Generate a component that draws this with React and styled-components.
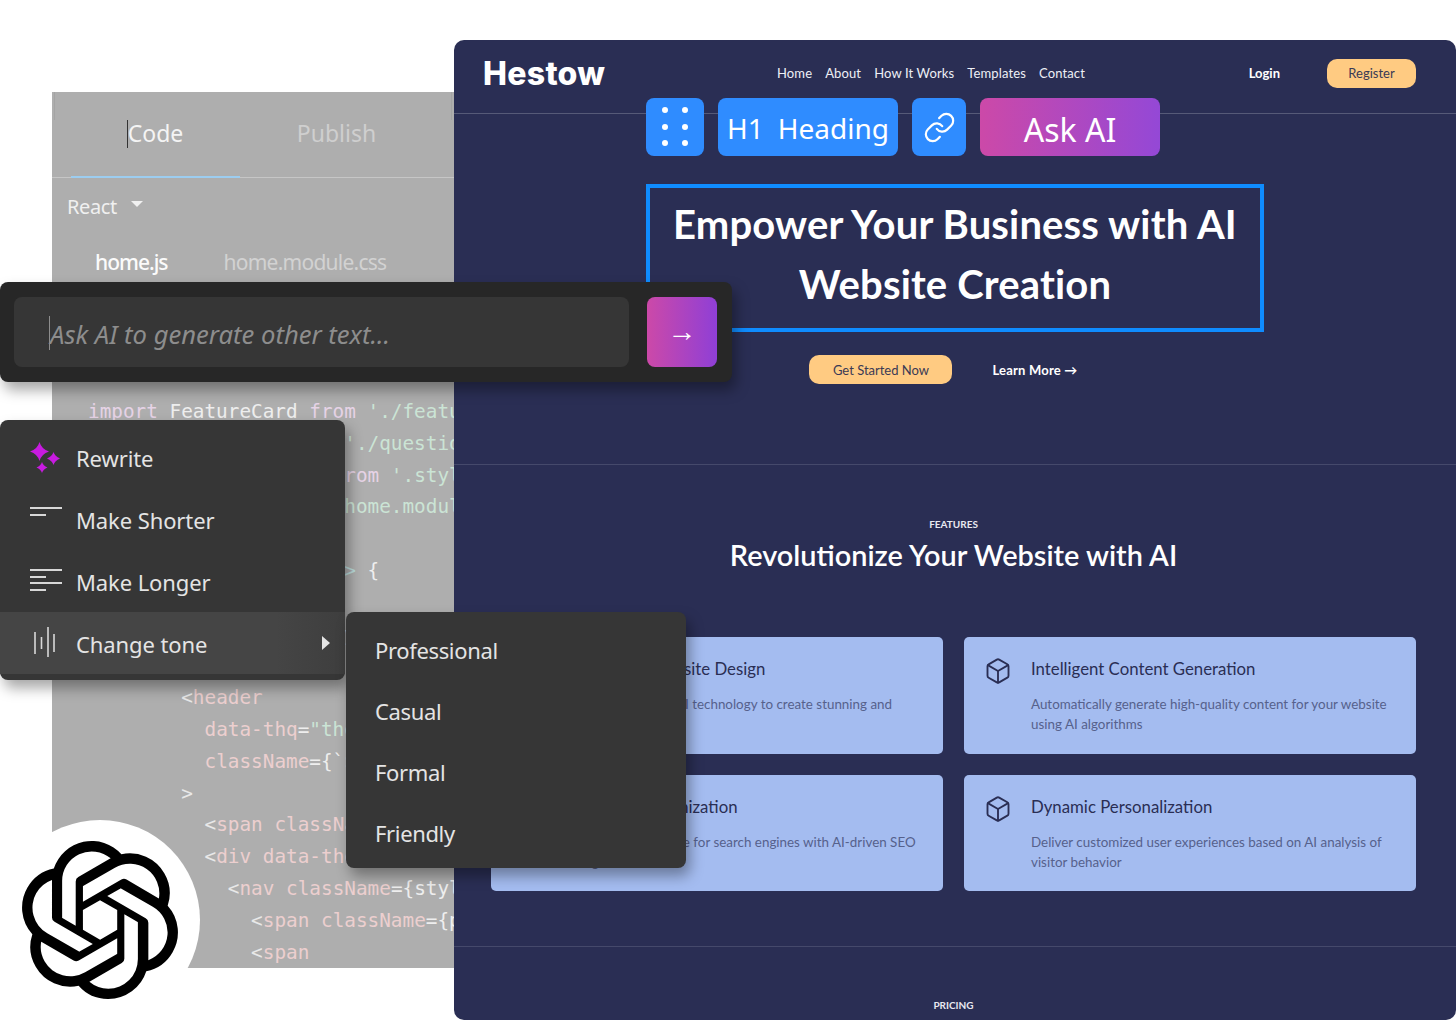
import styled, { createGlobalStyle } from "styled-components";
import { Box, Link } from "lucide-react";

const UI_FONT = `"Noto Sans", "Open Sans", sans-serif`;
const SITE_FONT = `Lato, "Noto Sans", sans-serif`;

const codeLines = [
  { indent: 0, tokens: [["kw", "import"], ["id", " FeatureCard "], ["kw", "from"], ["str", " './feature-card'"]] },
  { indent: 0, tokens: [["kw", "import"], ["id", " Question1 "], ["kw", "from"], ["str", " './question1'"]] },
  { indent: 0, tokens: [["kw", "import"], ["id", " projectStyles "], ["kw", "from"], ["str", " '.style.module.css'"]] },
  { indent: 0, tokens: [["kw", "import"], ["id", " styles "], ["kw", "from"], ["str", " './home.module.css'"]] },
  { indent: 0, tokens: [["id", " "]] },
  { indent: 0, tokens: [["kw", "const"], ["id", " Home = (props) "], ["punct", "=>"], ["id", " {"]] },
  { indent: 2, tokens: [["kw", "return"], ["id", " ("]] },
  { indent: 4, tokens: [["tag", "<div"], ["attr", " className"], ["id", "={styles}>"]] },
  { indent: 6, tokens: [["tag", "<Helmet>"]] },
  { indent: 8, tokens: [["angle", "<"], ["tag", "header"]] },
  { indent: 10, tokens: [["attr", "data-thq"], ["id", "="], ["str", '"thq-navbar"']] },
  { indent: 10, tokens: [["attr", "className"], ["id", "={`"], ["str", "${styles}"]] },
  { indent: 8, tokens: [["angle", ">"]] },
  { indent: 10, tokens: [["angle", "<"], ["tag", "span"], ["attr", " className"], ["id", "={styles}"]] },
  { indent: 10, tokens: [["angle", "<"], ["tag", "div"], ["attr", " data-thq"], ["id", "="], ["str", '"thq"']] },
  { indent: 12, tokens: [["angle", "<"], ["tag", "nav"], ["attr", " className"], ["id", "={styles}"]] },
  { indent: 14, tokens: [["angle", "<"], ["tag", "span"], ["attr", " className"], ["id", "={projectStyles}"]] },
  { indent: 14, tokens: [["angle", "<"], ["tag", "span"]] },
];

const tokenColors = {
  kw: "#e6d3e6",
  id: "#eeeeee",
  str: "#cbe4d5",
  tag: "#eccfcf",
  attr: "#eccfcf",
  angle: "#e8e8e8",
  punct: "#bcdcdc",
};

const navLinks = ["Home", "About", "How It Works", "Templates", "Contact"];

const features = [
  {
    title: "AI-Powered Website Design",
    text: "Utilize cutting-edge AI technology to create stunning and responsive websites",
  },
  {
    title: "Intelligent Content Generation",
    text: "Automatically generate high-quality content for your website using AI algorithms",
  },
  {
    title: "Smart SEO Optimization",
    text: "Optimize your website for search engines with AI-driven SEO strategies",
  },
  {
    title: "Dynamic Personalization",
    text: "Deliver customized user experiences based on AI analysis of visitor behavior",
  },
];

const SparkIcon = () => (
  <svg width="32" height="32" viewBox="0 0 32 32" fill="#c81be0">
    <path d="M9.5 1 Q11.5 8 19 10.5 Q11.5 13 9.5 20 Q7.5 13 0 10.5 Q7.5 8 9.5 1Z" />
    <path d="M23.5 11 Q24.8 15.2 30 17.5 Q24.8 19.8 23.5 24 Q22.2 19.8 17 17.5 Q22.2 15.2 23.5 11Z" />
    <path d="M12 21 Q13.2 24.8 17.5 26.5 Q13.2 28.2 12 32 Q10.8 28.2 6.5 26.5 Q10.8 24.8 12 21Z" />
  </svg>
);

const ShorterIcon = () => (
  <svg width="32" height="32" viewBox="0 0 32 32" stroke="#d8d8d8" strokeWidth="2">
    <path d="M0 5H32M0 12H16" />
  </svg>
);

const LongerIcon = () => (
  <svg width="32" height="32" viewBox="0 0 32 32" stroke="#d8d8d8" strokeWidth="2">
    <path d="M0 5H32M0 12H16M0 18H32M0 25H16" />
  </svg>
);

const ToneIcon = () => (
  <svg width="32" height="32" viewBox="0 0 32 32" stroke="#d8d8d8" strokeWidth="1.6">
    <path d="M5 5V27M11.5 10V22M18 0V30M24 7V25" />
  </svg>
);

const HandleIcon = () => (
  <svg width="26" height="40" viewBox="0 0 26 40" fill="#fff">
    <circle cx="3" cy="3" r="3" />
    <circle cx="23" cy="3" r="3" />
    <circle cx="3" cy="20" r="3" />
    <circle cx="23" cy="20" r="3" />
    <circle cx="3" cy="36" r="3" />
    <circle cx="23" cy="36" r="3" />
  </svg>
);

const OpenAiLogo = () => (
  <svg width="158" height="158" viewBox="0 0 24 24" fill="#000">
    <path d="M22.2819 9.8211a5.9847 5.9847 0 0 0-.5157-4.9108 6.0462 6.0462 0 0 0-6.5098-2.9A6.0651 6.0651 0 0 0 4.9807 4.1818a5.9847 5.9847 0 0 0-3.9977 2.9 6.0462 6.0462 0 0 0 .7427 7.0966 5.98 5.98 0 0 0 .511 4.9107 6.051 6.051 0 0 0 6.5146 2.9001A5.9847 5.9847 0 0 0 13.2599 24a6.0557 6.0557 0 0 0 5.7718-4.2058 5.9894 5.9894 0 0 0 3.9977-2.9001 6.0557 6.0557 0 0 0-.7475-7.0729zm-9.022 12.6081a4.4755 4.4755 0 0 1-2.8764-1.0408l.1419-.0804 4.7783-2.7582a.7948.7948 0 0 0 .3927-.6813v-6.7369l2.02 1.1686a.071.071 0 0 1 .038.052v5.5826a4.504 4.504 0 0 1-4.4945 4.4944zm-9.6607-4.1254a4.4708 4.4708 0 0 1-.5346-3.0137l.142.0852 4.783 2.7582a.7712.7712 0 0 0 .7806 0l5.8428-3.3685v2.3324a.0804.0804 0 0 1-.0332.0615L9.74 19.9502a4.4992 4.4992 0 0 1-6.1408-1.6464zM2.3408 7.8956a4.485 4.485 0 0 1 2.3655-1.9728V11.6a.7664.7664 0 0 0 .3879.6765l5.8144 3.3543-2.0201 1.1685a.0757.0757 0 0 1-.071 0l-4.8303-2.7865A4.504 4.504 0 0 1 2.3408 7.872zm16.5963 3.8558L13.1038 8.364 15.1192 7.2a.0757.0757 0 0 1 .071 0l4.8303 2.7913a4.4944 4.4944 0 0 1-.6765 8.1042v-5.6772a.79.79 0 0 0-.407-.667zm2.0107-3.0231l-.142-.0852-4.7735-2.7818a.7759.7759 0 0 0-.7854 0L9.409 9.2297V6.8974a.0662.0662 0 0 1 .0284-.0615l4.8303-2.7866a4.4992 4.4992 0 0 1 6.6802 4.66zM8.3065 12.863l-2.02-1.1638a.0804.0804 0 0 1-.038-.0567V6.0742a4.4992 4.4992 0 0 1 7.3757-3.4537l-.142.0805L8.704 5.459a.7948.7948 0 0 0-.3927.6813zm1.0976-2.3654l2.602-1.4998 2.6069 1.4998v2.9994l-2.5974 1.4997-2.6067-1.4997Z" />
  </svg>
);

const App = () => {
  return (
    <>
      <GlobalStyle />
      <Canvas>
        <CodePanel>
          <Tabs>
            <Tab $active>
              <TextCaret />
              Code
            </Tab>
            <Tab>Publish</Tab>
          </Tabs>
          <LanguageRow>
            React
            <DropCaret />
          </LanguageRow>
          <FileRow>
            <FileName $active>home.js</FileName>
            <FileName>home.module.css</FileName>
          </FileRow>
          <CodeBlock>
            {codeLines.map((line, i) => (
              <CodeLine key={i} $indent={line.indent}>
                {line.tokens.map(([kind, text], j) => (
                  <Token key={j} $kind={kind}>
                    {text}
                  </Token>
                ))}
              </CodeLine>
            ))}
          </CodeBlock>
        </CodePanel>

        <Preview>
          <Nav>
            <Logo>Hestow</Logo>
            <NavLinks>
              {navLinks.map((link) => (
                <NavLink key={link}>{link}</NavLink>
              ))}
            </NavLinks>
            <Auth>
              <Login>Login</Login>
              <Register>Register</Register>
            </Auth>
          </Nav>
          <Hero>
            <HeroHeading>
              Empower Your Business with AI
              <br />
              Website Creation
            </HeroHeading>
            <HeroActions>
              <PrimaryCta>Get Started Now</PrimaryCta>
              <LearnMore>Learn More →</LearnMore>
            </HeroActions>
          </Hero>
          <Features>
            <Eyebrow>FEATURES</Eyebrow>
            <SectionTitle>Revolutionize Your Website with AI</SectionTitle>
            <CardGrid>
              {features.map((feature) => (
                <Card key={feature.title}>
                  <CardIcon>
                    <Box size={28} strokeWidth={1.6} />
                  </CardIcon>
                  <div>
                    <CardTitle>{feature.title}</CardTitle>
                    <CardText>{feature.text}</CardText>
                  </div>
                </Card>
              ))}
            </CardGrid>
          </Features>
          <Pricing>
            <Eyebrow>PRICING</Eyebrow>
          </Pricing>
        </Preview>

        <Toolbar>
          <ToolButton $width={58}>
            <HandleIcon />
          </ToolButton>
          <ToolButton $width={180}>
            <HeadingLabel>H1</HeadingLabel>
            <HeadingLabel>Heading</HeadingLabel>
          </ToolButton>
          <ToolButton $width={54}>
            <Link size={33} strokeWidth={1.6} />
          </ToolButton>
          <AskButton>Ask AI</AskButton>
        </Toolbar>

        <PromptBar>
          <PromptInput>
            <PromptCaret />
            Ask AI to generate other text...
          </PromptInput>
          <SendButton>→</SendButton>
        </PromptBar>

        <ActionMenu>
          <ActionItem>
            <SparkIcon />
            <ActionLabel>Rewrite</ActionLabel>
          </ActionItem>
          <ActionItem>
            <ShorterIcon />
            <ActionLabel>Make Shorter</ActionLabel>
          </ActionItem>
          <ActionItem>
            <LongerIcon />
            <ActionLabel>Make Longer</ActionLabel>
          </ActionItem>
          <ActionItem $active>
            <ToneIcon />
            <ActionLabel>Change tone</ActionLabel>
            <SubArrow />
          </ActionItem>
        </ActionMenu>

        <ToneMenu>
          <ToneItem>Professional</ToneItem>
          <ToneItem>Casual</ToneItem>
          <ToneItem>Formal</ToneItem>
          <ToneItem>Friendly</ToneItem>
        </ToneMenu>

        <LogoBadge>
          <OpenAiLogo />
        </LogoBadge>
      </Canvas>
    </>
  );
};

export default App;

const GlobalStyle = createGlobalStyle`
  html, body {
    margin: 0;
    background: #fff;
  }
`;

const Canvas = styled.div`
  position: relative;
  width: 1456px;
  height: 1020px;
  overflow: hidden;
  background: #fff;
  font-family: ${UI_FONT};
`;

const CodePanel = styled.div`
  position: absolute;
  top: 92px;
  left: 52px;
  width: 402px;
  height: 876px;
  overflow: hidden;
  background: #aeaeae;
  display: flex;
  flex-direction: column;

  &::before,
  &::after {
    content: "";
    position: absolute;
    top: 0;
    width: 1px;
    height: 28px;
    background: #a4a4a4;
  }

  &::before {
    left: 2px;
  }

  &::after {
    right: 2px;
  }
`;

const Tabs = styled.div`
  display: flex;
  gap: 12px;
  height: 85px;
  padding-left: 19px;
  border-bottom: 1px solid #c6c6c6;
  flex-shrink: 0;
`;

const Tab = styled.div`
  position: relative;
  width: 169px;
  height: 86px;
  box-sizing: border-box;
  padding-bottom: 2px;
  display: flex;
  align-items: center;
  justify-content: center;
  font-size: 23px;
  color: ${(p) => (p.$active ? "#f4f4f4" : "#cfcfcf")};
  border-bottom: 2px solid ${(p) => (p.$active ? "#9ccdf0" : "transparent")};
`;

const TextCaret = styled.span`
  position: absolute;
  left: 56px;
  top: 28px;
  width: 1px;
  height: 28px;
  background: #333;
`;

const LanguageRow = styled.div`
  display: flex;
  align-items: center;
  gap: 14px;
  height: 56px;
  padding-left: 15px;
  font-size: 20px;
  letter-spacing: -0.4px;
  color: #f0f0f0;
  flex-shrink: 0;
`;

const DropCaret = styled.span`
  width: 0;
  height: 0;
  margin-top: -4px;
  border-left: 6px solid transparent;
  border-right: 6px solid transparent;
  border-top: 6px solid #f0f0f0;
`;

const FileRow = styled.div`
  display: flex;
  gap: 56px;
  padding-left: 43px;
  height: 162px;
  flex-shrink: 0;
  font-size: 21px;
  letter-spacing: -0.75px;
  line-height: 56px;
`;

const FileName = styled.span`
  color: ${(p) => (p.$active ? "#fbfbfb" : "#d2d2d2")};
  font-weight: ${(p) => (p.$active ? 500 : 400)};
  letter-spacing: ${(p) => (p.$active ? "-1px" : "-0.75px")};
`;

const CodeBlock = styled.div`
  padding-left: 36px;
  font-family: "DejaVu Sans Mono", "Liberation Mono", monospace;
  font-size: 19.35px;
  line-height: 31.8px;
`;

const CodeLine = styled.div`
  white-space: pre;
  padding-left: ${(p) => p.$indent * 11.65}px;
`;

const Token = styled.span`
  color: ${(p) => tokenColors[p.$kind]};
`;

const Preview = styled.div`
  position: absolute;
  top: 40px;
  left: 454px;
  width: 1002px;
  height: 980px;
  overflow: hidden;
  border-radius: 10px;
  background: #2a2e54;
  font-family: ${SITE_FONT};
`;

const Nav = styled.div`
  display: flex;
  align-items: center;
  height: 74px;
  box-sizing: border-box;
  padding: 0 40px 7px 29px;
  border-bottom: 1px solid #565a78;
`;

const Logo = styled.div`
  width: 122px;
  font-family: Inter, sans-serif;
  font-size: 32px;
  font-weight: 800;
  letter-spacing: 0.3px;
  white-space: nowrap;
  color: #fff;
`;

const NavLinks = styled.div`
  display: flex;
  gap: 13px;
  margin-left: 172px;
`;

const NavLink = styled.span`
  font-size: 13px;
  letter-spacing: 0.13px;
  color: #eef0f6;
`;

const Auth = styled.div`
  display: flex;
  align-items: center;
  gap: 47px;
  margin-left: auto;
`;

const Login = styled.span`
  font-size: 13px;
  font-weight: 700;
  color: #fff;
`;

const Register = styled.span`
  width: 89px;
  height: 29px;
  display: flex;
  align-items: center;
  justify-content: center;
  border-radius: 10px;
  background: #ffcb82;
  color: #3a3a55;
  font-size: 13px;
`;

const Hero = styled.div`
  display: flex;
  flex-direction: column;
  align-items: center;
  height: 351px;
  padding-top: 70px;
  box-sizing: border-box;
  border-bottom: 1px solid #45496b;
`;

const HeroHeading = styled.h1`
  width: 618px;
  height: 148px;
  margin: 0;
  box-sizing: border-box;
  border: 4px solid #0f8cff;
  padding-top: 6px;
  text-align: center;
  font-size: 40px;
  line-height: 60px;
  font-weight: 700;
  letter-spacing: 0.15px;
  color: #fff;
`;

const HeroActions = styled.div`
  display: flex;
  align-items: center;
  gap: 40px;
  margin-top: 23px;
  padding-right: 23px;
`;

const PrimaryCta = styled.span`
  width: 143px;
  height: 29px;
  display: flex;
  align-items: center;
  justify-content: center;
  border-radius: 10px;
  background: #ffcb82;
  color: #3a3a55;
  font-size: 13px;
`;

const LearnMore = styled.span`
  font-size: 13px;
  font-weight: 700;
  letter-spacing: 0.2px;
  color: #fff;
`;

const Features = styled.div`
  height: 482px;
  box-sizing: border-box;
  padding: 52px 40px 0 37px;
  display: flex;
  flex-direction: column;
  align-items: center;
  border-bottom: 1px solid #45496b;
`;

const Eyebrow = styled.div`
  font-size: 10px;
  line-height: 14px;
  font-weight: 700;
  color: #e8e8f0;
`;

const SectionTitle = styled.h2`
  margin: 4px 0 0;
  font-size: 28.9px;
  line-height: 40px;
  font-weight: 600;
  color: #fff;
`;

const CardGrid = styled.div`
  width: 100%;
  display: grid;
  grid-template-columns: 452px 452px;
  grid-auto-rows: 116.5px;
  gap: 21px;
  margin-top: 62px;
`;

const Card = styled.div`
  display: flex;
  gap: 19px;
  box-sizing: border-box;
  padding: 20px 20px 0 20px;
  border-radius: 5px;
  background: #a4bcf0;
`;

const CardIcon = styled.div`
  width: 28px;
  height: 28px;
  flex-shrink: 0;
  color: #2a2e54;
`;

const CardTitle = styled.div`
  font-size: 16.8px;
  line-height: 24px;
  color: #2a2e54;
`;

const CardText = styled.div`
  margin-top: 13px;
  font-size: 13.4px;
  line-height: 20px;
  color: #56618c;
`;

const Pricing = styled.div`
  display: flex;
  justify-content: center;
  padding: 51px 40px 0 37px;
`;

const Toolbar = styled.div`
  position: absolute;
  top: 98px;
  left: 646px;
  display: flex;
  gap: 14px;
`;

const ToolButton = styled.div`
  width: ${(p) => p.$width}px;
  height: 58px;
  display: flex;
  align-items: center;
  justify-content: center;
  gap: 14px;
  border-radius: 8px;
  background: #2f8cff;
  color: #fff;
`;

const HeadingLabel = styled.span`
  padding-top: 2px;
  font-family: ${UI_FONT};
  font-size: 28px;
  color: #fff;
`;

const AskButton = styled.div`
  width: 180px;
  height: 58px;
  box-sizing: border-box;
  padding-top: 4px;
  display: flex;
  align-items: center;
  justify-content: center;
  border-radius: 8px;
  background: linear-gradient(90deg, #cc49a8, #9448d6);
  color: #fff;
  font-size: 32px;
`;

const PromptBar = styled.div`
  position: absolute;
  top: 282px;
  left: 0;
  width: 732px;
  height: 100px;
  box-sizing: border-box;
  padding: 15px;
  display: flex;
  gap: 18px;
  border-radius: 8px;
  background: #272727;
  box-shadow: 4px 8px 14px rgba(0, 0, 0, 0.35);
`;

const PromptInput = styled.div`
  position: relative;
  flex: 1;
  margin-left: -1px;
  display: flex;
  align-items: center;
  padding-left: 36px;
  padding-top: 4px;
  border-radius: 8px;
  background: #363636;
  color: #8d8d8d;
  font-size: 25.6px;
  font-style: italic;
`;

const PromptCaret = styled.span`
  position: absolute;
  left: 35px;
  top: 19px;
  width: 1px;
  height: 34px;
  background: #8d8d8d;
`;

const SendButton = styled.div`
  width: 70px;
  height: 70px;
  box-sizing: border-box;
  padding-bottom: 5px;
  display: flex;
  align-items: center;
  justify-content: center;
  border-radius: 8px;
  background: linear-gradient(90deg, #cc49a8, #8f3fd6);
  color: #fff;
  font-size: 29px;
`;

const ActionMenu = styled.div`
  position: absolute;
  top: 420px;
  left: 0;
  width: 345px;
  box-sizing: border-box;
  padding: 6px 0;
  border-radius: 8px;
  background: #363636;
  box-shadow: 4px 8px 14px rgba(0, 0, 0, 0.35);
`;

const ActionItem = styled.div`
  position: relative;
  height: 62px;
  display: flex;
  align-items: center;
  gap: 14px;
  padding-left: 30px;
  background: ${(p) =>
    p.$active ? "linear-gradient(90deg, #454545 80%, #3e3e3e)" : "transparent"};

  > svg {
    flex-shrink: 0;
  }
`;

const ActionLabel = styled.span`
  padding-top: 2px;
  font-size: 22px;
  letter-spacing: -0.1px;
  color: #e4e4e4;
`;

const SubArrow = styled.span`
  position: absolute;
  right: 15px;
  top: 24px;
  width: 0;
  height: 0;
  border-top: 7px solid transparent;
  border-bottom: 7px solid transparent;
  border-left: 8px solid #e4e4e4;
`;

const ToneMenu = styled.div`
  position: absolute;
  top: 612px;
  left: 346px;
  width: 340px;
  height: 256px;
  box-sizing: border-box;
  padding-top: 7px;
  border-radius: 8px;
  background: #363636;
  box-shadow: 4px 8px 14px rgba(0, 0, 0, 0.35);
`;

const ToneItem = styled.div`
  height: 61px;
  display: flex;
  align-items: center;
  padding-left: 29px;
  font-size: 22px;
  letter-spacing: -0.35px;
  color: #e4e4e4;
`;

const LogoBadge = styled.div`
  position: absolute;
  top: 820px;
  left: 0;
  width: 200px;
  height: 200px;
  display: flex;
  align-items: center;
  justify-content: center;
  border-radius: 50%;
  background: #fff;
`;
